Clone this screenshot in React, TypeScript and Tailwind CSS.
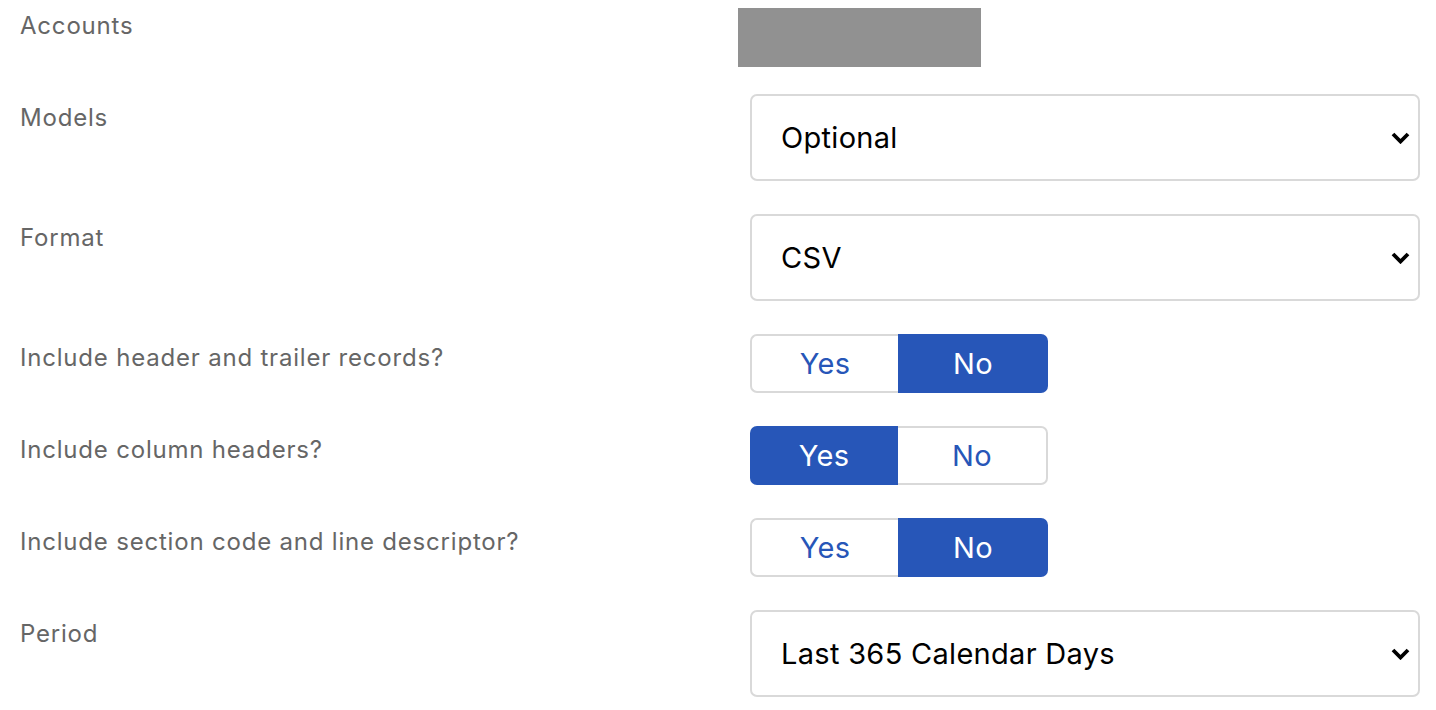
const Chevron = () => (
    <svg width="19" height="12" viewBox="0 0 19 12" className="shrink-0">
        <path d="M2 2 L9.5 9.5 L17 2" fill="none" stroke="#000" strokeWidth="3.8" strokeLinejoin="miter" />
    </svg>
)

const Select = ({ value }: { value: string }) => (
    <div className="w-[670px] h-[87px] border-2 border-[#d9d9d9] rounded-[7px] bg-white flex items-center justify-between pl-[29px] pr-[8px] text-[29px] tracking-[0.3px] text-black">
        <span>{value}</span>
        <Chevron />
    </div>
)

const Toggle = ({ yes }: { yes: boolean }) => (
    <div className="flex w-[298px] h-[59px] text-[29px] tracking-[0.3px]">
        <div
            className={
                yes
                    ? "w-[148px] flex items-center justify-center bg-[#2756b8] text-white rounded-l-[7px]"
                    : "w-[148px] flex items-center justify-center border-2 border-r-0 border-[#d9d9d9] text-[#2756b8] rounded-l-[7px]"
            }>
            Yes
        </div>
        <div
            className={
                yes
                    ? "w-[150px] flex items-center justify-center border-2 border-l-0 border-[#d9d9d9] text-[#2756b8] rounded-r-[7px]"
                    : "w-[150px] flex items-center justify-center bg-[#2756b8] text-white rounded-r-[7px]"
            }>
            No
        </div>
    </div>
)

const Row = ({ label, children }: { label: string; children: React.ReactNode }) => (
    <div className="flex">
        <div className="w-[730px] pt-[9px] text-[24px] leading-[30px] tracking-[0.8px] text-[#666]">{label}</div>
        {children}
    </div>
)

export default function App() {
    return (
        <div className="min-h-[710px] bg-white pl-[20px] font-['Inter',sans-serif]">
            <div className="flex">
                <div className="w-[718px] pt-[11px] text-[24px] leading-[30px] tracking-[0.8px] text-[#666]">Accounts</div>
                <div className="mt-[8px] w-[243px] h-[59px] bg-[#919191]" />
            </div>
            <div className="mt-[27px] flex flex-col gap-[33px]">
                <Row label="Models">
                    <Select value="Optional" />
                </Row>
                <Row label="Format">
                    <Select value="CSV" />
                </Row>
                <Row label="Include header and trailer records?">
                    <Toggle yes={false} />
                </Row>
                <Row label="Include column headers?">
                    <Toggle yes={true} />
                </Row>
                <Row label="Include section code and line descriptor?">
                    <Toggle yes={false} />
                </Row>
                <Row label="Period">
                    <Select value="Last 365 Calendar Days" />
                </Row>
            </div>
        </div>
    )
}
